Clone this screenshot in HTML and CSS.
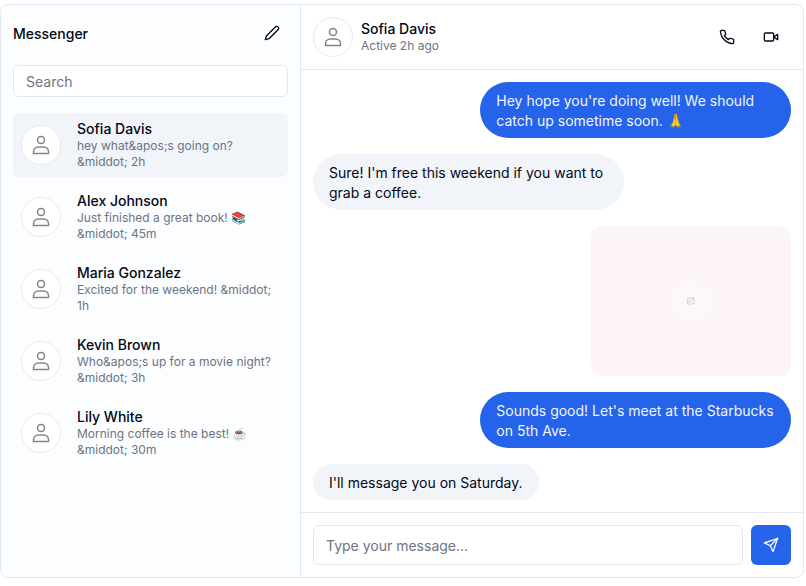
FILE: index.html
```
<!DOCTYPE html>
<html lang="en">
<head>
<meta charset="utf-8">
<title>Messenger</title>
<link rel="stylesheet" href="styles.css">
</head>
<body>
<svg width="0" height="0" class="defs" aria-hidden="true">
  <symbol id="person" viewBox="0 0 18 20"><circle cx="9" cy="5.100" r="3.500"/><path d="M1.500 18.500v-1.700c0-2.900 2.100-4.900 5-4.900h5c2.900 0 5 2 5 4.900v1.700z"/></symbol>
</svg>
<div class="frame">
  <aside class="sidebar">
    <div class="sidebar-header">
      <div class="title">Messenger</div>
      <button class="icon-button" aria-label="New message"><svg class="icon" viewBox="0 0 24 24"><path d="M17 3a2.850 2.830 0 1 1 4 4L7.500 20.500 2 22l1.500-5.500Z"/></svg></button>
    </div>
    <input class="field search" placeholder="Search">
    <div class="contacts">
      <a class="contact active"><span class="avatar"><svg><use href="#person"/></svg></span><div class="info"><div class="name">Sofia Davis</div><div class="preview">hey what&amp;apos;s going on? &amp;middot; 2h</div></div></a>
      <a class="contact"><span class="avatar"><svg><use href="#person"/></svg></span><div class="info"><div class="name">Alex Johnson</div><div class="preview">Just finished a great book! 📚 &amp;middot; 45m</div></div></a>
      <a class="contact"><span class="avatar"><svg><use href="#person"/></svg></span><div class="info"><div class="name">Maria Gonzalez</div><div class="preview">Excited for the weekend! &amp;middot; 1h</div></div></a>
      <a class="contact"><span class="avatar"><svg><use href="#person"/></svg></span><div class="info"><div class="name">Kevin Brown</div><div class="preview">Who&amp;apos;s up for a movie night? &amp;middot; 3h</div></div></a>
      <a class="contact"><span class="avatar"><svg><use href="#person"/></svg></span><div class="info"><div class="name">Lily White</div><div class="preview">Morning coffee is the best! ☕ &amp;middot; 30m</div></div></a>
    </div>
  </aside>
  <main class="chat">
    <header class="chat-header">
      <span class="avatar"><svg><use href="#person"/></svg></span>
      <div class="info"><div class="name">Sofia Davis</div><div class="preview">Active 2h ago</div></div>
      <div class="actions">
        <button class="icon-button" aria-label="Call"><svg class="icon" viewBox="0 0 24 24"><path d="M22 16.920v3a2 2 0 0 1-2.180 2 19.790 19.790 0 0 1-8.630-3.070 19.500 19.500 0 0 1-6-6 19.790 19.790 0 0 1-3.070-8.670A2 2 0 0 1 4.110 2h3a2 2 0 0 1 2 1.720 12.840 12.840 0 0 0 .7 2.810 2 2 0 0 1-.45 2.110L8.090 9.910a16 16 0 0 0 6 6l1.270-1.270a2 2 0 0 1 2.110-.45 12.840 12.840 0 0 0 2.810.7A2 2 0 0 1 22 16.920z"/></svg></button>
        <button class="icon-button" aria-label="Video"><svg class="icon" viewBox="0 0 24 24"><path d="m22 8-6 4 6 4V8Z"/><rect width="14" height="12" x="2" y="6" rx="2"/></svg></button>
      </div>
    </header>
    <div class="messages">
      <div class="bubble sent">Hey hope you're doing well! We should catch up sometime soon. 🙏</div>
      <div class="bubble">Sure! I'm free this weekend if you want to grab a coffee.</div>
      <div class="photo"><span class="glow"><svg viewBox="0 0 8 8"><path d="M1 1h6v6H1zM1 5l2-1 1 1M4 3l3-2"/></svg></span></div>
      <div class="bubble sent">Sounds good! Let's meet at the Starbucks on 5th Ave.</div>
      <div class="bubble">I'll message you on Saturday.</div>
    </div>
    <form class="composer">
      <input class="field" placeholder="Type your message...">
      <button class="send" type="button" aria-label="Send"><svg class="icon" viewBox="0 0 24 24"><path d="m22 2-7 20-4-9-9-4Z"/><path d="M22 2 11 13"/></svg></button>
    </form>
  </main>
</div>
</body>
</html>
```
FILE: styles.css
```
* { box-sizing: border-box; }
body {
  margin: 0;
  padding-top: 4px;
  height: 586px;
  background: #fff;
  color: #020817;
  font: 14px/20px Inter, "Liberation Sans", sans-serif;
  overflow: hidden;
}
.defs { display: block; }
button { border: 0; padding: 0; background: none; color: inherit; }
.frame {
  display: flex;
  width: 804px;
  height: 574px;
  border: 1px solid #e2e8f0;
  border-radius: 8px;
  overflow: hidden;
}
.sidebar {
  width: 300px;
  flex: none;
  padding: 12px;
  background: #fbfdff;
  border-right: 1px solid #e2e8f0;
}
.sidebar-header { display: flex; justify-content: space-between; align-items: center; height: 32px; margin: 0 0 16px; }
.sidebar-header .icon-button { width: 32px; height: 32px; }
.title, .name { font-weight: 500; }
.title { padding-top: 2px; }
.icon-button { display: flex; align-items: center; justify-content: center; width: 40px; height: 40px; }
.icon, .glow svg { fill: none; stroke: currentColor; stroke-width: 2; stroke-linecap: round; stroke-linejoin: round; }
.icon { width: 16px; height: 16px; }
.field {
  display: block;
  width: 100%;
  height: 40px;
  padding: 0 12px;
  border: 1px solid #e2e8f0;
  border-radius: 6px;
  background: #fff;
  font: inherit;
  outline: 0;
}
.field::placeholder { color: #6b7482; opacity: 1; }
.search { height: 32px; }
.contacts { display: grid; gap: 8px; margin-top: 16px; }
.contact { display: flex; align-items: center; gap: 16px; height: 64px; padding: 8px; border-radius: 6px; }
.contact.active { background: #f1f5f9; }
.avatar {
  display: flex;
  flex: none;
  align-items: center;
  justify-content: center;
  width: 40px;
  height: 40px;
  border: 1px solid #e8ebee;
  border-radius: 50%;
  background: #fff;
  color: #858585;
}
.avatar svg { width: 18px; height: 20px; fill: none; stroke: currentColor; stroke-width: 1.5; }
.name { line-height: 16px; }
.preview { padding-top: 1px; margin-bottom: -1px; color: #6b7482; font-size: 12px; line-height: 16px; }
.chat { display: flex; flex: 1; flex-direction: column; min-width: 0; }
.chat-header { display: flex; align-items: center; gap: 8px; height: 65px; padding: 0 12px; border-bottom: 1px solid #e2e8f0; }
.actions { display: flex; gap: 4px; margin-left: auto; }
.messages { display: flex; flex: 1; flex-direction: column; align-items: flex-start; gap: 16px; padding: 12px; }
.bubble { max-width: 65%; padding: 9px 16px 7px; border-radius: 28px; background: #f1f5f9; }
.sent { align-self: flex-end; background: #2563eb; color: #f1f5fc; }
.photo { display: flex; align-items: center; justify-content: center; align-self: flex-end; width: 200px; height: 150px; border-radius: 12px; background: #fdf4f7; }
.glow { display: flex; align-items: center; justify-content: center; width: 46px; height: 42px; border-radius: 50%; background: radial-gradient(closest-side, #fcf8f7 80%, #fdf4f7); color: #bdb9b9; }
.glow svg { width: 8px; height: 8px; stroke-width: .6; }
.composer { display: flex; gap: 8px; padding: 12px; border-top: 1px solid #e2e8f0; }
.composer .field { flex: 1; min-width: 0; }
.send { display: flex; align-items: center; justify-content: center; width: 40px; height: 40px; border-radius: 6px; background: #2563eb; color: #f8fafc; }
```
